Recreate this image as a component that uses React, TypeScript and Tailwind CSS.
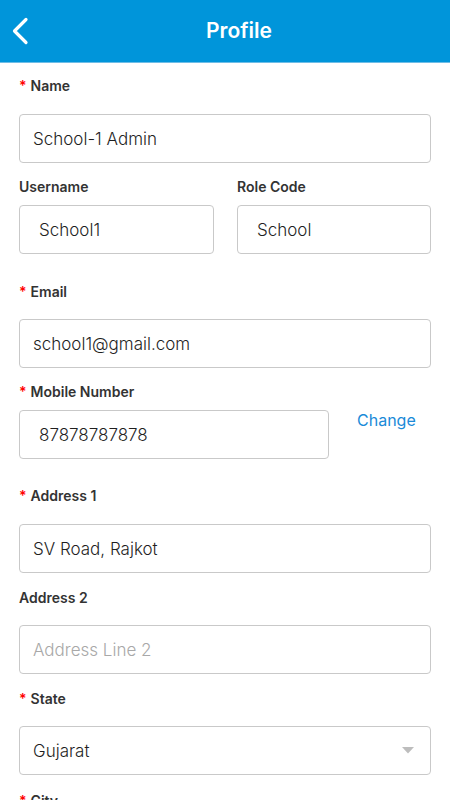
import React from "react";

const Label: React.FC<{ text: string; required?: boolean; className?: string }> = ({ text, required, className }) => (
  <div className={`flex items-center h-5 text-[14px] font-semibold text-[#333] ${className ?? ""}`}>
    {required && <span className="text-[#ff0000] mr-[4px]">*</span>}
    <span>{text}</span>
  </div>
);

const Field: React.FC<{ value?: string; placeholder?: string; className?: string; pad?: string; children?: React.ReactNode }> = ({
  value,
  placeholder,
  className,
  pad,
  children,
}) => (
  <div
    className={`h-[49px] border border-[#c9c9c9] rounded-[4px] flex items-center ${pad ?? "pl-[13px]"} pr-4 pt-[3px] text-[17px] font-light ${className ?? ""}`}
  >
    {value ? <span className="text-[#1f1f1f]">{value}</span> : <span className="text-[#a8a8a8]">{placeholder}</span>}
    {children}
  </div>
);

const App: React.FC = () => {
  return (
    <div className="w-[450px] h-[800px] overflow-hidden bg-white" style={{ fontFamily: "Inter, 'Noto Sans', sans-serif" }}>
      <div className="h-[63px] bg-[#0095da] border-b border-[#6fbde6] flex items-center relative">
        <svg className="absolute left-[11px] top-[17px]" width="18" height="28" viewBox="0 0 18 28">
          <path d="M15 2.5 L3.5 14 L15 25.5" fill="none" stroke="#fff" strokeWidth="3.2" strokeLinecap="round" strokeLinejoin="round" />
        </svg>
        <div className="w-full pl-[28px] text-center text-white text-[21px] font-semibold">Profile</div>
      </div>

      <div className="px-[19px]">
        <Label text="Name" required className="mt-[12px]" />
        <Field value="School-1 Admin" className="mt-[19px]" />

        <div className="flex gap-[23px] mt-[13px]">
          <div className="w-[195px]">
            <Label text="Username" />
            <Field value="School1" pad="pl-[19px]" className="mt-[9px]" />
          </div>
          <div className="flex-1">
            <Label text="Role Code" />
            <Field value="School" pad="pl-[19px]" className="mt-[9px]" />
          </div>
        </div>

        <Label text="Email" required className="mt-[27px]" />
        <Field value="school1@gmail.com" className="mt-[18px]" />

        <Label text="Mobile Number" required className="mt-[13px]" />
        <div className="flex mt-[9px]">
          <Field value="87878787878" pad="pl-[19px]" className="w-[310px]" />
          <div className="ml-[28px] -mt-[2px] text-[16px] text-[#1a8ad8]">Change</div>
        </div>

        <Label text="Address 1" required className="mt-[26px]" />
        <Field value="SV Road, Rajkot" className="mt-[19px]" />

        <Label text="Address 2" className="mt-[14px]" />
        <Field placeholder="Address Line 2" className="mt-[18px]" />

        <Label text="State" required className="mt-[14px]" />
        <Field value="Gujarat" className="mt-[18px] justify-between">
          <svg width="12" height="7" viewBox="0 0 12 7" className="-mt-[3px]">
            <path d="M0 0 H12 L6 6.5 Z" fill="#bdbdbd" />
          </svg>
        </Field>

        <Label text="City" required className="mt-[15px]" />
      </div>
    </div>
  );
};

export default App;
